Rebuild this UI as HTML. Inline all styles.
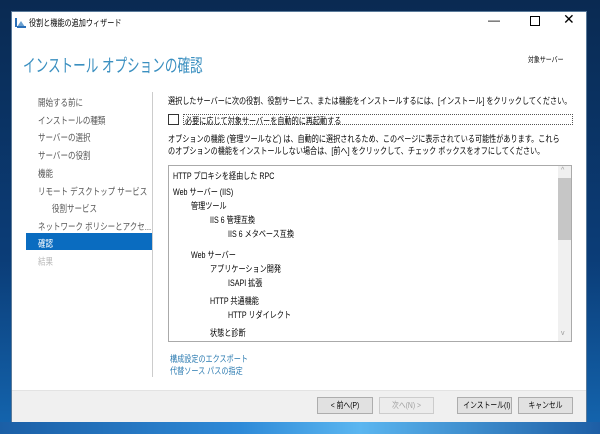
<!DOCTYPE html>
<html><head><meta charset="utf-8"><style>
body{margin:0;width:600px;height:434px;overflow:hidden;background:linear-gradient(180deg,#0a2a52 0%,#0b3d78 60%,#1466b0 100%);font-family:"Liberation Sans","Noto Sans CJK JP",sans-serif;position:relative}
.a{position:absolute;white-space:nowrap}
.s{transform-origin:0 0;transform:scaleX(.79)}
.win{position:absolute;left:11px;top:11px;width:576px;height:411px;background:#fff;border:1px solid #5a7a9a;box-sizing:border-box}
.t{font-size:9px;color:#000}
.nav{font-size:9.5px;color:#555}
.li{font-size:9px;color:#000}
.btn{position:absolute;top:397px;height:17px;background:#e1e1e1;border:1px solid #adadad;box-sizing:border-box;font-size:8.5px;line-height:15px;color:#000;white-space:nowrap;overflow:hidden}
.btn span{display:block;transform:scaleX(.8);transform-origin:50% 0;text-align:center}
</style></head><body>
<div class="a" style="left:0;top:422px;width:600px;height:12px;background:linear-gradient(90deg,#1b5fa6,#2e8ad8 40%,#5bb6f0 60%,#1d5ea5)"></div>
<div class="win"></div>
<svg class="a" style="left:15px;top:17px" width="11" height="11"><rect x="0" y="1" width="2" height="9" fill="#2a6fb8"/><path d="M2 10 L6 4 L10 10Z" fill="#6aa0d0"/><rect x="2" y="9" width="9" height="2" fill="#2a6fb8"/></svg>
<div class="a t s" style="left:29px;top:16px;font-size:9px">役割と機能の追加ウィザード</div>
<div class="a" style="left:488px;top:13px;font-size:12px;color:#000">—</div>
<div class="a" style="left:530px;top:16px;width:8px;height:8px;border:1px solid #000"></div>
<div class="a" style="left:563px;top:11px;font-size:14px;color:#000">✕</div>
<div class="a" style="left:23px;top:52px;font-size:18px;color:#3a8fc0;transform-origin:0 0;transform:scaleX(.7)">インストール オプションの確認</div>
<div class="a s" style="left:528px;top:54px;font-size:7.5px;color:#000">対象サーバー</div>
<div class="a" style="left:152px;top:92px;width:1px;height:285px;background:#ccc"></div>
<div class="a nav s" style="left:38px;top:95px">開始する前に</div>
<div class="a nav s" style="left:38px;top:113px">インストールの種類</div>
<div class="a nav s" style="left:38px;top:130px">サーバーの選択</div>
<div class="a nav s" style="left:38px;top:148px">サーバーの役割</div>
<div class="a nav s" style="left:38px;top:166px">機能</div>
<div class="a nav s" style="left:38px;top:184px">リモート デスクトップ サービス</div>
<div class="a nav s" style="left:52px;top:201px">役割サービス</div>
<div class="a nav s" style="left:38px;top:219px">ネットワーク ポリシーとアクセ...</div>
<div class="a" style="left:26px;top:233px;width:126px;height:17px;background:#0a6cc0"></div>
<div class="a nav s" style="left:38px;top:236px;color:#fff">確認</div>
<div class="a nav s" style="left:38px;top:254px;color:#bbb">結果</div>
<div class="a t s" style="left:168px;top:94px">選択したサーバーに次の役割、役割サービス、または機能をインストールするには、[インストール] をクリックしてください。</div>
<div class="a" style="left:168px;top:114px;width:11px;height:11px;border:1px solid #333;box-sizing:border-box"></div>
<div class="a" style="left:183px;top:114px;width:390px;height:11px;border:1px dotted #555;box-sizing:border-box"></div>
<div class="a t s" style="left:185px;top:114px">必要に応じて対象サーバーを自動的に再起動する</div>
<div class="a t s" style="left:168px;top:132px">オプションの機能 (管理ツールなど) は、自動的に選択されるため、このページに表示されている可能性があります。これら</div>
<div class="a t s" style="left:168px;top:144px">のオプションの機能をインストールしない場合は、[前へ] をクリックして、チェック ボックスをオフにしてください。</div>
<div class="a" style="left:168px;top:165px;width:404px;height:177px;border:1px solid #aaa;box-sizing:border-box"></div>
<div class="a" style="left:558px;top:166px;width:13px;height:175px;background:#f0f0f0"></div>
<div class="a" style="left:558px;top:178px;width:13px;height:62px;background:#c6c6c6"></div>
<div class="a" style="left:561px;top:167px;font-size:7px;color:#999">^</div>
<div class="a" style="left:561px;top:330px;font-size:7px;color:#999">v</div>
<div class="a li s" style="left:173px;top:169px">HTTP プロキシを経由した RPC</div>
<div class="a li s" style="left:173px;top:185px">Web サーバー (IIS)</div>
<div class="a li s" style="left:191px;top:199px">管理ツール</div>
<div class="a li s" style="left:210px;top:213px">IIS 6 管理互換</div>
<div class="a li s" style="left:228px;top:227px">IIS 6 メタベース互換</div>
<div class="a li s" style="left:191px;top:248px">Web サーバー</div>
<div class="a li s" style="left:210px;top:262px">アプリケーション開発</div>
<div class="a li s" style="left:228px;top:276px">ISAPI 拡張</div>
<div class="a li s" style="left:210px;top:294px">HTTP 共通機能</div>
<div class="a li s" style="left:228px;top:308px">HTTP リダイレクト</div>
<div class="a li s" style="left:210px;top:326px">状態と診断</div>
<div class="a s" style="left:170px;top:352px;font-size:9px;color:#2a7ab0">構成設定のエクスポート</div>
<div class="a s" style="left:170px;top:364px;font-size:9px;color:#2a7ab0">代替ソース パスの指定</div>
<div class="a" style="left:12px;top:390px;width:574px;height:31px;background:#f0f0f0;border-top:1px solid #e3e3e3"></div>
<div class="btn" style="left:317px;width:56px"><span>&lt; 前へ(P)</span></div>
<div class="btn" style="left:379px;width:55px;color:#a0a0a0;border-color:#ccc;background:#ececec"><span>次へ(N) &gt;</span></div>
<div class="btn" style="left:457px;width:55px"><span>インストール(I)</span></div>
<div class="btn" style="left:518px;width:55px"><span>キャンセル</span></div>
</body></html>
